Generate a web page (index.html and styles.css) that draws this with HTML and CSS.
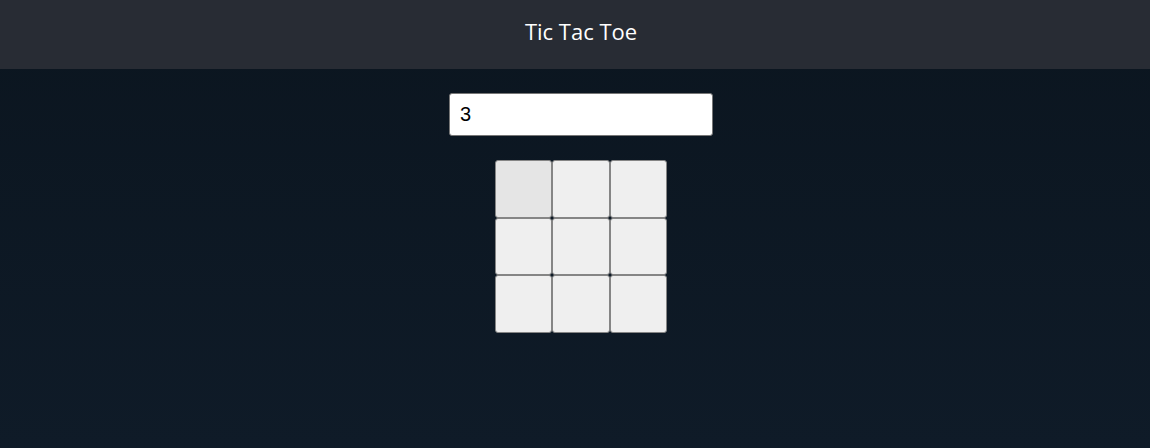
FILE: index.html
```html
<!DOCTYPE html>
<html>
<head>
<meta charset="utf-8">
<link rel="stylesheet" href="styles.css">
</head>
<body>
<header class="app-header"><h1 class="title">Tic Tac Toe</h1></header>
<main class="main">
  <input class="size-input" type="text" value="3">
  <div class="board">
    <button class="cell cell-active"></button>
    <button class="cell"></button>
    <button class="cell"></button>
    <button class="cell"></button>
    <button class="cell"></button>
    <button class="cell"></button>
    <button class="cell"></button>
    <button class="cell"></button>
    <button class="cell"></button>
  </div>
</main>
</body>
</html>
```
FILE: styles.css
```css
html, body {
  margin: 0;
  padding: 0;
  height: 100%;
}
body {
  background: linear-gradient(to bottom, #0b151f 0%, #0f1b28 100%);
  font-family: "Open Sans", "Noto Sans", sans-serif;
  overflow: hidden;
}
.app-header {
  height: 69px;
  background: #282c34;
  display: flex;
  align-items: center;
  justify-content: center;
  padding-left: 12px;
  box-sizing: border-box;
}
.title {
  margin: 0;
  color: #ffffff;
  font-size: 22px;
  font-weight: 400;
  line-height: 1;
  padding-bottom: 7px;
}
.main {
  display: flex;
  flex-direction: column;
  align-items: center;
  padding-top: 24px;
  padding-left: 12px;
  gap: 24px;
}
.size-input {
  width: 264px;
  height: 43px;
  box-sizing: border-box;
  border: 1px solid #767676;
  border-radius: 3px;
  background: #fff;
  padding: 0 10px;
  font-family: "Liberation Sans", Arial, sans-serif;
  font-size: 20px;
  color: #000;
  outline: none;
}
.board {
  width: 172px;
  height: 173px;
  display: grid;
  grid-template-columns: repeat(3, 1fr);
  grid-template-rows: repeat(3, 1fr);
}
.cell {
  box-sizing: border-box;
  border: 1px solid #858585;
  border-radius: 3px;
  background: #efefef;
  margin: 0;
  padding: 0;
}
.cell-active {
  background: #e5e5e5;
}
```
